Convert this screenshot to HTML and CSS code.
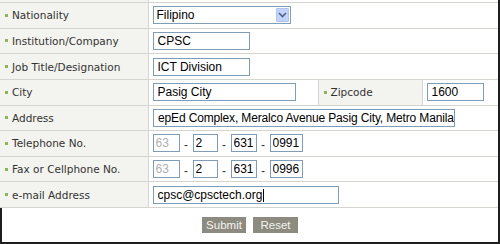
FILE: index.html
```html
<!DOCTYPE html>
<html>
<head>
<meta charset="utf-8">
<link rel="stylesheet" href="styles.css">
</head>
<body>
<div class="frame">
  <table class="form">
    <colgroup>
      <col class="c-lbl"><col class="c-val"><col class="c-lbl2"><col class="c-val2">
    </colgroup>
    <tr class="cap"><td class="lbl"></td><td colspan="3"></td></tr>
    <tr>
      <td class="lbl"><span class="dot"></span>Nationality</td>
      <td colspan="3" class="val">
        <span class="sel-wrap">
          <select class="sel"><option>Filipino</option></select>
          <span class="sel-btn"><svg width="9" height="6" viewBox="0 0 9 6"><path d="M1 1 L4.5 4.5 L8 1" fill="none" stroke="#4d6185" stroke-width="1.6"/></svg></span>
        </span>
      </td>
    </tr>
    <tr>
      <td class="lbl"><span class="dot"></span>Institution/Company</td>
      <td colspan="3" class="val"><input class="in w97" value="CPSC"></td>
    </tr>
    <tr>
      <td class="lbl"><span class="dot"></span>Job Title/Designation</td>
      <td colspan="3" class="val"><input class="in w97" value="ICT Division"></td>
    </tr>
    <tr>
      <td class="lbl"><span class="dot"></span>City</td>
      <td class="val"><input class="in w143" value="Pasig City"></td>
      <td class="lbl"><span class="dot"></span>Zipcode</td>
      <td class="val"><input class="in w57" value="1600"></td>
    </tr>
    <tr>
      <td class="lbl"><span class="dot"></span>Address</td>
      <td colspan="3" class="val"><input id="addr" class="in w302 tight" value="DepEd Complex, Meralco Avenue Pasig City, Metro Manila"></td>
    </tr>
    <tr>
      <td class="lbl"><span class="dot"></span>Telephone No.</td>
      <td colspan="3" class="val">
        <div class="phone">
          <input class="in w27 dim" value="63" readonly><span class="dash">-</span><input class="in w25" value="2"><span class="dash">-</span><input class="in w26" value="631"><span class="dash">-</span><input class="in w33" value="0991">
        </div>
      </td>
    </tr>
    <tr>
      <td class="lbl"><span class="dot"></span>Fax or Cellphone No.</td>
      <td colspan="3" class="val">
        <div class="phone">
          <input class="in w27 dim" value="63" readonly><span class="dash">-</span><input class="in w25" value="2"><span class="dash">-</span><input class="in w26" value="631"><span class="dash">-</span><input class="in w33" value="0996">
        </div>
      </td>
    </tr>
    <tr>
      <td class="lbl"><span class="dot"></span>e-mail Address</td>
      <td colspan="3" class="val"><span class="mail-wrap"><input id="mail" class="in w186" value="cpsc@cpsctech.org"><span class="caret"></span></span></td>
    </tr>
  </table>
  <div class="actions">
    <button class="btn">Submit</button>
    <button class="btn">Reset</button>
  </div>
</div>
<script src="script.js"></script>
</body>
</html>
```

FILE: styles.css
```css
html, body {
  margin: 0;
  padding: 0;
  background: #fff;
}
.frame {
  width: 500px;
  height: 244px;
  box-sizing: border-box;
  border-right: 2px solid #1e1e1e;
  border-bottom: 2px solid #1e1e1e;
  display: flex;
  flex-direction: column;
  overflow: hidden;
}
.form {
  width: 498px;
  border-collapse: collapse;
  table-layout: fixed;
  font-family: "DejaVu Sans", Verdana, sans-serif;
  font-size: 10.5px;
  color: #333;
}
.c-lbl { width: 148px; }
.c-val { width: 170px; }
.c-lbl2 { width: 104px; }
.c-val2 { width: auto; }
.form td {
  border-bottom: 1px solid #d5d5cf;
  border-left: 1px solid #d5d5cf;
  padding: 0;
  height: 24.625px;
  vertical-align: middle;
}
.form td:first-child { border-left: none; }
.form tr.cap td { height: 2px; }
.lbl {
  background: #f3f3ef;
  padding-left: 5px !important;
  white-space: nowrap;
}
.dot {
  display: inline-block;
  width: 3px;
  height: 3px;
  background: #8fb25a;
  margin-right: 4px;
  vertical-align: middle;
  position: relative;
  top: -1px;
}
.val {
  padding-left: 4px !important;
  background: #fff;
  white-space: nowrap;
}
.in {
  box-sizing: border-box;
  height: 18px;
  border: 1px solid #7f9db9;
  padding: 0 0 0 4px;
  margin: 0;
  font-family: "Liberation Sans", Arial, sans-serif;
  font-size: 12px;
  color: #000;
  background: #fff;
  outline: none;
  vertical-align: middle;
  caret-color: transparent;
}
.tight { letter-spacing: -0.15px; }
.w97 { width: 97px; }
.w143 { width: 143px; }
.w57 { width: 57px; }
.w302 { width: 302px; }
.w27 { width: 27px; padding-left: 2px; }
.w25 { width: 25px; padding-left: 2px; }
.w26 { width: 26px; padding-left: 2px; }
.w33 { width: 33px; padding-left: 2px; }
.w186 { width: 186px; }
.dim { color: #b0b0b0; }
.mail-wrap {
  position: relative;
  display: inline-block;
  vertical-align: middle;
}
.mail-wrap .in { display: block; }
.caret {
  position: absolute;
  left: 110px;
  top: 3px;
  width: 1px;
  height: 13px;
  background: #000;
}
.phone {
  display: flex;
  align-items: center;
}
.dash {
  width: 13px;
  text-align: center;
  font-family: "Liberation Sans", Arial, sans-serif;
  font-size: 12px;
  color: #333;
  position: relative;
  top: 2px;
}
.sel-wrap {
  position: relative;
  display: inline-block;
  vertical-align: middle;
}
.sel {
  -webkit-appearance: none;
  appearance: none;
  box-sizing: border-box;
  width: 138px;
  height: 18px;
  border: 1px solid #7f9db9;
  padding: 0 0 0 3px;
  margin: 0;
  font-family: "Liberation Sans", Arial, sans-serif;
  font-size: 12px;
  color: #000;
  background: #fff;
  outline: none;
  display: block;
}
.sel-btn {
  position: absolute;
  top: 2px;
  right: 2px;
  width: 13px;
  height: 14px;
  background: #c3d3fd;
  border: 1px solid #b0c3ee;
  box-sizing: border-box;
  border-radius: 1px;
  display: flex;
  align-items: center;
  justify-content: center;
  pointer-events: none;
}
.actions {
  flex: 1;
  border-left: 2px solid #1e1e1e;
  display: flex;
  justify-content: center;
  align-items: flex-start;
  gap: 7px;
  padding-top: 9px;
}
.btn {
  height: 16px;
  padding: 0;
  border: none;
  background: #8d8b7f;
  color: #f4f4ee;
  font-family: "Liberation Sans", Tahoma, sans-serif;
  font-size: 11.5px;
  line-height: 16px;
  text-align: center;
}
.btn:first-child { width: 44px; }
.btn:last-child { width: 45px; }
```

FILE: script.js
```js
var a = document.getElementById('addr');
a.scrollLeft = a.scrollWidth;
```
